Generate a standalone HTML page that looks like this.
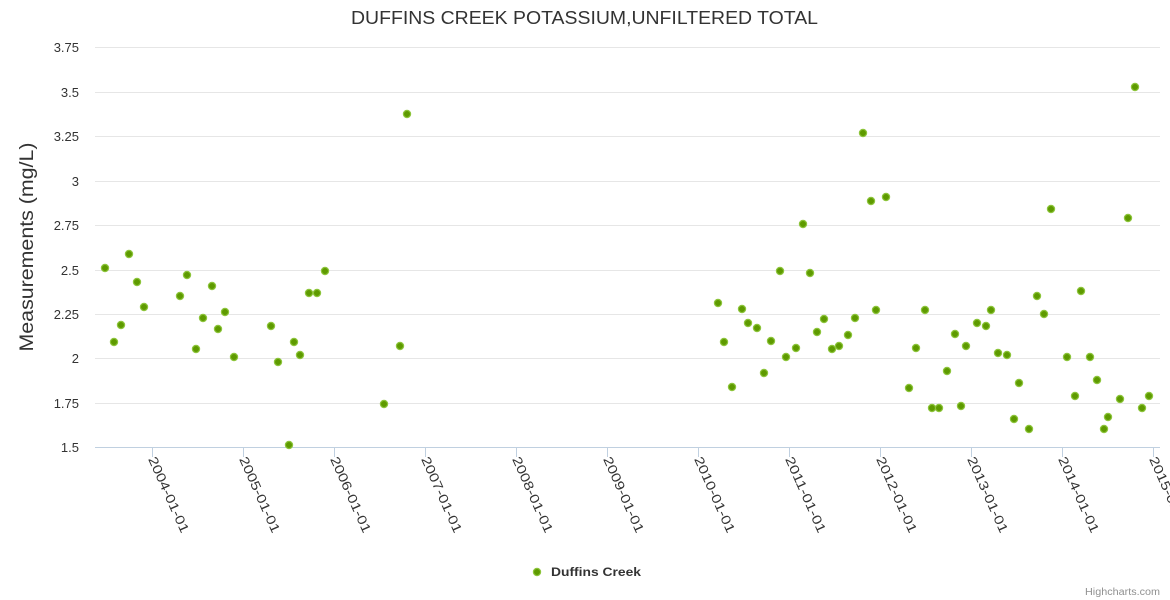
<!DOCTYPE html>
<html><head><meta charset="utf-8"><style>body{margin:0;background:#fff}svg{display:block;font-family:"Liberation Sans","DejaVu Sans",sans-serif}</style></head>
<body>
<svg width="1170" height="600" xmlns="http://www.w3.org/2000/svg">
<rect width="1170" height="600" fill="#fff"/>
<text x="351" y="24" font-size="18" fill="#333" textLength="467" lengthAdjust="spacingAndGlyphs">DUFFINS CREEK POTASSIUM,UNFILTERED TOTAL</text>
<g stroke="#e6e6e6" stroke-width="1">
<line x1="95" x2="1160" y1="47.5" y2="47.5"/><line x1="95" x2="1160" y1="92.5" y2="92.5"/><line x1="95" x2="1160" y1="136.5" y2="136.5"/><line x1="95" x2="1160" y1="181.5" y2="181.5"/><line x1="95" x2="1160" y1="225.5" y2="225.5"/><line x1="95" x2="1160" y1="270.5" y2="270.5"/><line x1="95" x2="1160" y1="314.5" y2="314.5"/><line x1="95" x2="1160" y1="358.5" y2="358.5"/><line x1="95" x2="1160" y1="403.5" y2="403.5"/>
</g>
<line x1="95" x2="1160" y1="447.5" y2="447.5" stroke="#c0d0e0"/>
<g stroke="#c0d0e0"><line x1="152.5" x2="152.5" y1="447" y2="457"/><line x1="243.5" x2="243.5" y1="447" y2="457"/><line x1="334.5" x2="334.5" y1="447" y2="457"/><line x1="425.5" x2="425.5" y1="447" y2="457"/><line x1="516.5" x2="516.5" y1="447" y2="457"/><line x1="607.5" x2="607.5" y1="447" y2="457"/><line x1="698.5" x2="698.5" y1="447" y2="457"/><line x1="789.5" x2="789.5" y1="447" y2="457"/><line x1="880.5" x2="880.5" y1="447" y2="457"/><line x1="971.5" x2="971.5" y1="447" y2="457"/><line x1="1062.5" x2="1062.5" y1="447" y2="457"/><line x1="1153.5" x2="1153.5" y1="447" y2="457"/></g>
<g font-size="13" fill="#333" text-anchor="end">
<text x="79" y="52">3.75</text><text x="79" y="97">3.5</text><text x="79" y="141">3.25</text><text x="79" y="186">3</text><text x="79" y="230">2.75</text><text x="79" y="275">2.5</text><text x="79" y="319">2.25</text><text x="79" y="363">2</text><text x="79" y="408">1.75</text><text x="79" y="452">1.5</text>
</g>
<text transform="translate(33,247) rotate(-90)" text-anchor="middle" font-size="19" fill="#333" textLength="209" lengthAdjust="spacingAndGlyphs">Measurements (mg/L)</text>
<g font-size="13" fill="#333">
<text transform="translate(148,459) rotate(66)" textLength="82" lengthAdjust="spacingAndGlyphs">2004-01-01</text>
<text transform="translate(239,459) rotate(66)" textLength="82" lengthAdjust="spacingAndGlyphs">2005-01-01</text>
<text transform="translate(330,459) rotate(66)" textLength="82" lengthAdjust="spacingAndGlyphs">2006-01-01</text>
<text transform="translate(421,459) rotate(66)" textLength="82" lengthAdjust="spacingAndGlyphs">2007-01-01</text>
<text transform="translate(512,459) rotate(66)" textLength="82" lengthAdjust="spacingAndGlyphs">2008-01-01</text>
<text transform="translate(603,459) rotate(66)" textLength="82" lengthAdjust="spacingAndGlyphs">2009-01-01</text>
<text transform="translate(694,459) rotate(66)" textLength="82" lengthAdjust="spacingAndGlyphs">2010-01-01</text>
<text transform="translate(785,459) rotate(66)" textLength="82" lengthAdjust="spacingAndGlyphs">2011-01-01</text>
<text transform="translate(876,459) rotate(66)" textLength="82" lengthAdjust="spacingAndGlyphs">2012-01-01</text>
<text transform="translate(967,459) rotate(66)" textLength="82" lengthAdjust="spacingAndGlyphs">2013-01-01</text>
<text transform="translate(1058,459) rotate(66)" textLength="82" lengthAdjust="spacingAndGlyphs">2014-01-01</text>
<text transform="translate(1149,459) rotate(66)" textLength="82" lengthAdjust="spacingAndGlyphs">2015-01-01</text>
</g>
<g fill="#5e9a00" stroke="#8cc43a" stroke-width="1.2">
<circle cx="105" cy="268" r="3.6"/><circle cx="114" cy="342" r="3.6"/><circle cx="121" cy="325" r="3.6"/><circle cx="129" cy="254" r="3.6"/><circle cx="137" cy="282" r="3.6"/><circle cx="144" cy="307" r="3.6"/><circle cx="180" cy="296" r="3.6"/><circle cx="187" cy="275" r="3.6"/><circle cx="196" cy="349" r="3.6"/><circle cx="203" cy="318" r="3.6"/><circle cx="212" cy="286" r="3.6"/><circle cx="218" cy="329" r="3.6"/><circle cx="225" cy="312" r="3.6"/><circle cx="234" cy="357" r="3.6"/><circle cx="271" cy="326" r="3.6"/><circle cx="278" cy="362" r="3.6"/><circle cx="289" cy="445" r="3.6"/><circle cx="294" cy="342" r="3.6"/><circle cx="300" cy="355" r="3.6"/><circle cx="309" cy="293" r="3.6"/><circle cx="317" cy="293" r="3.6"/><circle cx="325" cy="271" r="3.6"/><circle cx="384" cy="404" r="3.6"/><circle cx="400" cy="346" r="3.6"/><circle cx="407" cy="114" r="3.6"/>
<circle cx="718" cy="303" r="3.6"/><circle cx="724" cy="342" r="3.6"/><circle cx="732" cy="387" r="3.6"/><circle cx="742" cy="309" r="3.6"/><circle cx="748" cy="323" r="3.6"/><circle cx="757" cy="328" r="3.6"/><circle cx="764" cy="373" r="3.6"/><circle cx="771" cy="341" r="3.6"/><circle cx="780" cy="271" r="3.6"/><circle cx="786" cy="357" r="3.6"/><circle cx="796" cy="348" r="3.6"/><circle cx="803" cy="224" r="3.6"/><circle cx="810" cy="273" r="3.6"/><circle cx="817" cy="332" r="3.6"/><circle cx="824" cy="319" r="3.6"/><circle cx="832" cy="349" r="3.6"/><circle cx="839" cy="346" r="3.6"/><circle cx="848" cy="335" r="3.6"/><circle cx="855" cy="318" r="3.6"/><circle cx="863" cy="133" r="3.6"/><circle cx="871" cy="201" r="3.6"/><circle cx="876" cy="310" r="3.6"/><circle cx="886" cy="197" r="3.6"/><circle cx="909" cy="388" r="3.6"/><circle cx="916" cy="348" r="3.6"/><circle cx="925" cy="310" r="3.6"/><circle cx="932" cy="408" r="3.6"/><circle cx="939" cy="408" r="3.6"/><circle cx="947" cy="371" r="3.6"/><circle cx="955" cy="334" r="3.6"/><circle cx="961" cy="406" r="3.6"/><circle cx="966" cy="346" r="3.6"/><circle cx="977" cy="323" r="3.6"/><circle cx="986" cy="326" r="3.6"/><circle cx="991" cy="310" r="3.6"/><circle cx="998" cy="353" r="3.6"/><circle cx="1007" cy="355" r="3.6"/><circle cx="1014" cy="419" r="3.6"/><circle cx="1019" cy="383" r="3.6"/><circle cx="1029" cy="429" r="3.6"/><circle cx="1037" cy="296" r="3.6"/><circle cx="1044" cy="314" r="3.6"/><circle cx="1051" cy="209" r="3.6"/><circle cx="1067" cy="357" r="3.6"/><circle cx="1075" cy="396" r="3.6"/><circle cx="1081" cy="291" r="3.6"/><circle cx="1090" cy="357" r="3.6"/><circle cx="1097" cy="380" r="3.6"/><circle cx="1104" cy="429" r="3.6"/><circle cx="1108" cy="417" r="3.6"/><circle cx="1120" cy="399" r="3.6"/><circle cx="1128" cy="218" r="3.6"/><circle cx="1135" cy="87" r="3.6"/><circle cx="1142" cy="408" r="3.6"/><circle cx="1149" cy="396" r="3.6"/>
<circle cx="537" cy="572" r="3.6"/>
</g>
<text x="551" y="576" font-size="12" font-weight="bold" fill="#333" textLength="90" lengthAdjust="spacingAndGlyphs">Duffins Creek</text>
<text x="1085" y="595" font-size="10" fill="#909090" textLength="75" lengthAdjust="spacingAndGlyphs">Highcharts.com</text>
</svg>
</body></html>
